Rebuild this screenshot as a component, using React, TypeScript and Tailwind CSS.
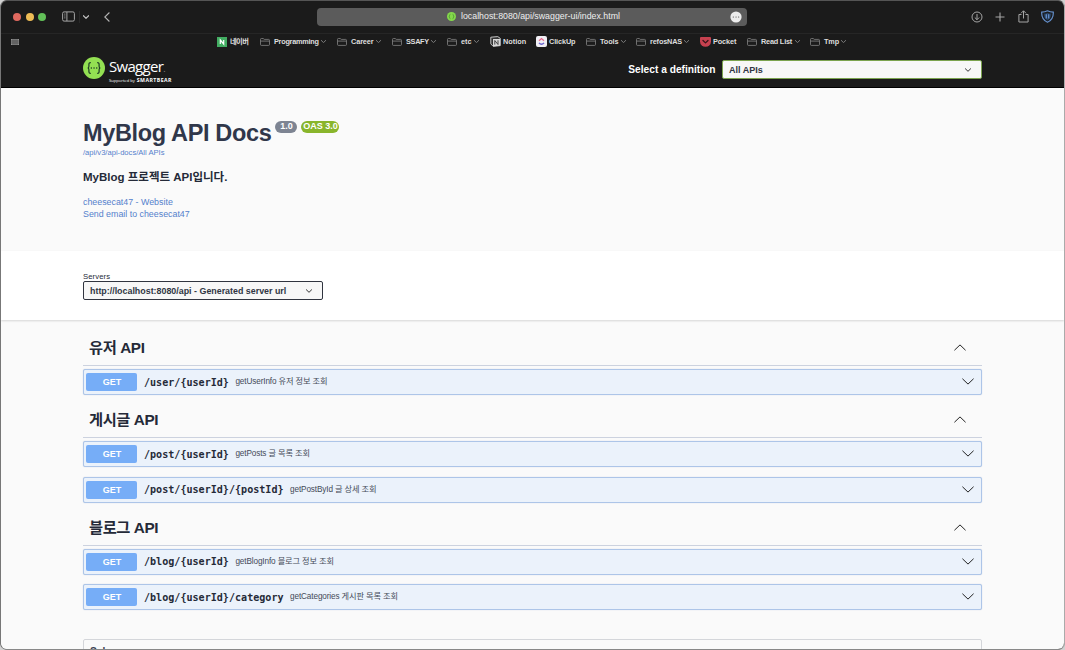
import type { ReactNode } from "react";

const SANS = "font-['Liberation_Sans','Noto_Sans_CJK_KR',sans-serif]";

function Chevron({ className, up = false, weight = 1 }: { className: string; up?: boolean; weight?: number }) {
  return (
    <svg viewBox="0 0 12 7" fill="none" stroke="currentColor" strokeWidth={weight} strokeLinecap="round" strokeLinejoin="round" className={className}>
      <path d={up ? "M0.7 6 L6 0.9 L11.3 6" : "M0.7 1 L6 6.1 L11.3 1"} />
    </svg>
  );
}

function FolderIcon() {
  return (
    <svg viewBox="0 0 10 8" fill="none" stroke="#858585" strokeWidth="0.8" className="h-2 w-2.5">
      <path d="M0.5 6.5V1.4Q0.5 0.5 1.4 0.5H3.2L4.2 1.4H8.6Q9.5 1.4 9.5 2.3V6.5Q9.5 7.4 8.6 7.4H1.4Q0.5 7.4 0.5 6.5ZM0.5 3.1H9.5" />
    </svg>
  );
}

function NaverIcon() {
  return (
    <svg viewBox="0 0 10 10" className="size-[10px]">
      <rect width="10" height="10" fill="#42ad62" />
      <path d="M3.3 7V3L6.7 7V3" fill="none" stroke="#fff" strokeWidth="1.2" />
    </svg>
  );
}

function NotionIcon() {
  return (
    <svg viewBox="0 0 11 11" className="size-[11px]">
      <path d="M0.8 1.2L7.8 0.6L10.3 2.4V9.6L3.2 10.4L0.8 7.9Z" fill="#333" stroke="#d5d5d5" strokeWidth="0.9" />
      <path d="M3 3H10V9.8L3 10.2Z" fill="#d8d8d8" />
      <path d="M4.8 8.6V4.5L8 8.5V4.3" fill="none" stroke="#333" strokeWidth="0.9" />
    </svg>
  );
}

function ClickUpIcon() {
  return (
    <svg viewBox="0 0 11 11" className="size-[11px]">
      <rect width="11" height="11" rx="2" fill="#f1eff5" />
      <path d="M3 4.7L5.5 2.6L8 4.7" fill="none" stroke="#e56a8e" strokeWidth="1.3" />
      <path d="M2.9 6.9Q5.5 9.6 8.1 6.9" fill="none" stroke="#6964cf" strokeWidth="1.3" />
    </svg>
  );
}

function PocketIcon() {
  return (
    <svg viewBox="0 0 11 10" className="h-[10px] w-[11px]">
      <path d="M1 0H10Q11 0 11 1V4.5A5.5 5.3 0 0 1 0 4.5V1Q0 0 1 0Z" fill="#c6414f" />
      <path d="M3 3.5L5.5 5.9L8 3.5" fill="none" stroke="#351519" strokeWidth="1.3" strokeLinecap="round" strokeLinejoin="round" />
    </svg>
  );
}

type Bookmark = { label: string; slot: string; text: string; icon?: ReactNode };

const bookmarks: Bookmark[] = [
  { label: "네이버", slot: "w-[43px]", text: "ml-[3px] tracking-[-0.6px]", icon: <NaverIcon /> },
  { label: "Programming", slot: "w-[77px]", text: "ml-1 w-[45px] tracking-[-0.25px]" },
  { label: "Career", slot: "w-[55px]", text: "ml-1 w-[23px] tracking-[-0.1px]" },
  { label: "SSAFY", slot: "w-[55px]", text: "ml-1 w-[23px] tracking-[-0.3px]" },
  { label: "etc", slot: "w-[43px]", text: "ml-1 w-[11px]" },
  { label: "Notion", slot: "w-[46px]", text: "ml-[2px]", icon: <NotionIcon /> },
  { label: "ClickUp", slot: "w-[50px]", text: "ml-[2px] tracking-[-0.1px]", icon: <ClickUpIcon /> },
  { label: "Tools", slot: "w-[50px]", text: "ml-1 w-[19px] tracking-[-0.12px]" },
  { label: "refosNAS", slot: "w-[64px]", text: "ml-1 w-[32px] tracking-[-0.15px]" },
  { label: "Pocket", slot: "w-[47px]", text: "ml-[2px] tracking-[-0.1px]", icon: <PocketIcon /> },
  { label: "Read List", slot: "w-[63px]", text: "ml-1 w-[32px] tracking-[-0.2px]" },
  { label: "Tmp", slot: "w-[40px]", text: "ml-1 w-[15px] tracking-[-0.1px]" },
];

function Toolbar() {
  return (
    <div className="flex h-[33px] shrink-0 items-center border-b border-[#262626] pb-px">
      <div className="flex w-[316px] items-center pl-3">
        <span className="size-2 rounded-full bg-[#e0695f]" />
        <span className="ml-[4.5px] size-2 rounded-full bg-[#eebc55]" />
        <span className="ml-[4.5px] size-2 rounded-full bg-[#62c058]" />
        <svg viewBox="0 0 13 11" fill="none" stroke="#a5a5a5" className="ml-4 h-[11px] w-[13px]">
          <rect x="0.6" y="0.9" width="11.8" height="9.2" rx="1.5" />
          <path d="M4.9 1V10" />
          <path d="M2 3.1H3.5M2 5H3.5M2 6.9H3.5" strokeWidth="0.7" />
        </svg>
        <span className="ml-1 h-3 w-px bg-[#292929]" />
        <Chevron weight={2.4} className="ml-[3px] h-[4px] w-[6px] text-[#bdbdbd]" />
        <svg viewBox="0 0 6 10" fill="none" stroke="#b2b2b2" strokeWidth="1.1" className="ml-[15px] h-[10px] w-[6px]">
          <path d="M5.4 0.5L0.8 5L5.4 9.5" />
        </svg>
      </div>
      <div className="flex h-[18px] w-[430px] items-center rounded-[4px] bg-[#5b5b5b] pr-[5px] pl-[130px] text-[8.8px] text-[#eeeeee]">
        <svg viewBox="0 0 10 10" className="size-[9px]">
          <circle cx="5" cy="5" r="5" fill="#84d94b" />
          <path d="M3.8 2.6Q2.8 2.6 2.8 4Q2.8 5 2.1 5Q2.8 5 2.8 6Q2.8 7.4 3.8 7.4M6.2 2.6Q7.2 2.6 7.2 4Q7.2 5 7.9 5Q7.2 5 7.2 6Q7.2 7.4 6.2 7.4" fill="none" stroke="#4a8a34" strokeWidth="0.8" />
        </svg>
        <span className="ml-[5px] pt-px whitespace-nowrap">localhost:8080/api/swagger-ui/index.html</span>
        <svg viewBox="0 0 12 12" className="ml-auto size-[12px]">
          <circle cx="6" cy="6" r="5.6" fill="#ececec" />
          <path d="M3.3 6H3.4M6 6H6.1M8.6 6H8.7" stroke="#555" strokeWidth="1.2" strokeLinecap="round" />
        </svg>
      </div>
      <div className="ml-auto flex items-center pr-[10px] text-[#a5a5a5]">
        <svg viewBox="0 0 12 12" fill="none" stroke="currentColor" className="size-[12px]">
          <circle cx="6" cy="6" r="5" />
          <path d="M6 3V8.7M3.8 6.5L6 8.7L8.2 6.5" />
        </svg>
        <svg viewBox="0 0 10 10" fill="none" stroke="currentColor" strokeWidth="1.1" className="ml-3 size-[10px]">
          <path d="M5 0.5V9.5M0.5 5H9.5" />
        </svg>
        <svg viewBox="0 0 11 13" fill="none" stroke="currentColor" className="ml-[13px] h-[13px] w-[11px]">
          <path d="M3.5 4.5H0.9V12H10.1V4.5H7.5M5.5 8.5V0.9M3 3.3L5.5 0.8L8 3.3" />
        </svg>
        <svg viewBox="0 0 13 13" fill="none" stroke="#648fcb" strokeWidth="1.2" className="ml-[12px] size-[13px]">
          <path d="M6.5 0.8Q9 2 12.3 2.1Q12.7 9.5 6.5 12.3Q0.3 9.5 0.7 2.1Q4 2 6.5 0.8Z" />
          <path d="M6.5 2.7Q8.5 3.5 10.3 3.6Q10.3 8.6 6.5 10.5Q2.7 8.6 2.7 3.6Q4.5 3.5 6.5 2.7Z" fill="#263e5d" stroke="none" />
          <path d="M5.3 4.2V8.5M7.7 4.2V8.5" strokeWidth="1.3" />
        </svg>
      </div>
    </div>
  );
}

function BookmarkBar() {
  return (
    <div className="flex h-[15px] shrink-0 items-center">
      <svg viewBox="0 0 8 6" className="ml-[10px] h-[6px] w-[8px]">
        <rect width="8" height="6" fill="#929292" />
        <path d="M2 0V6M4 0V6M6 0V6M0 2H8M0 4H8" stroke="#1c1c1c" strokeWidth="0.45" />
      </svg>
      <div className="ml-[198px] flex items-center text-[7.3px] font-bold text-[#dedede]">
        {bookmarks.map((b) => (
          <div key={b.label} className={`flex shrink-0 items-center ${b.slot}`}>
            {b.icon ?? <FolderIcon />}
            <span className={`pt-px whitespace-nowrap ${b.text}`}>{b.label}</span>
            {!b.icon && <Chevron weight={2} className="ml-[2px] h-[3px] w-[5px] text-[#8f8f8f]" />}
          </div>
        ))}
      </div>
    </div>
  );
}

function SwaggerBar() {
  return (
    <div className="flex h-[39px] shrink-0 items-center border-b border-black px-[82px] pt-[2px]">
      <svg viewBox="0 0 22 22" className="-mt-[2px] size-[22px]">
        <circle cx="11" cy="11" r="11" fill="#93e052" />
        <path d="M7.8 5.7Q5.9 5.5 5.9 7.4V9.2Q5.9 11 4.6 11Q5.9 11 5.9 12.8V14.6Q5.9 16.5 7.8 16.3M14.2 5.7Q16.1 5.5 16.1 7.4V9.2Q16.1 11 17.4 11Q16.1 11 16.1 12.8V14.6Q16.1 16.5 14.2 16.3" fill="none" stroke="#1c3a24" strokeWidth="1.2" />
        <path d="M8.3 11H8.4M11 11H11.1M13.7 11H13.8" stroke="#1c3a24" strokeWidth="1.4" strokeLinecap="round" />
      </svg>
      <div className="ml-1 flex flex-col pt-[3px] text-white">
        <span className="font-['Open_Sans',sans-serif] text-[15px] leading-[17px] tracking-[-0.7px]">
          Swagger<span className="text-[9px] text-[#888]">.</span>
        </span>
        <span className="flex items-baseline gap-[2px] whitespace-nowrap font-['Open_Sans',sans-serif] leading-[6px]">
          <span className="text-[4.1px]">Supported by</span>
          <span className="text-[5.2px] font-bold tracking-[0.45px]">SMARTBEAR</span>
        </span>
      </div>
      <span className="ml-auto pt-px text-[10.2px] font-bold text-white">Select a definition</span>
      <div className="mt-px ml-[6.5px] flex h-[19px] w-[260px] items-center justify-between rounded-[2px] border border-[#7ba34e] bg-[#f7f7f7] pr-[10px] pl-[6px] text-[9px] font-bold text-[#303644]">
        <span className="pt-[2px]">All APIs</span>
        <Chevron weight={2} className="h-[4px] w-[6px] text-[#333]" />
      </div>
    </div>
  );
}

function Info() {
  return (
    <section className="h-[163px] shrink-0 bg-[#fafafa] pt-[31px] pl-[82px] text-[#3b4151]">
      <div className="flex">
        <h1 className="text-[23.5px] leading-[28px] font-bold tracking-[-0.35px] whitespace-nowrap text-[#30374a]">MyBlog API Docs</h1>
        <span className="mt-[1.5px] ml-1 flex h-[12px] w-[22px] items-center justify-center rounded-full bg-[#7d8492] pt-px text-[9px] font-bold text-white">1.0</span>
        <span className="mt-[1.5px] ml-1 flex h-[12px] w-[38px] items-center justify-center rounded-full bg-[#89b52b] pt-px text-[9px] font-bold whitespace-nowrap text-white">OAS 3.0</span>
      </div>
      <a className="block text-[7.6px] leading-[11px] text-[#5581cc]">/api/v3/api-docs/All APIs</a>
      <h2 className="mt-[10px] text-[11.5px] leading-[18px] font-bold text-[#252a38]">MyBlog 프로젝트 API입니다.</h2>
      <div className="mt-[11px] text-[8.85px] leading-[11.5px] text-[#5581cc]">
        <a className="block">cheesecat47 - Website</a>
        <a className="block">Send email to cheesecat47</a>
      </div>
    </section>
  );
}

function Servers() {
  return (
    <section className="relative h-[69px] shrink-0 bg-white pt-[21px] pl-[82px] shadow-[0_1px_2px_rgba(0,0,0,0.15)]">
      <div className="text-[7.7px] leading-[9px] tracking-[0.1px] text-[#252a38]">Servers</div>
      <div className="flex h-[19px] w-[240px] items-center justify-between rounded-[2px] border border-[#30343f] bg-[#f7f7f7] pr-[10px] pl-[6px] text-[8.9px] font-bold whitespace-nowrap text-[#303644]">
        <span className="pt-[2px]">http://localhost:8080/api - Generated server url</span>
        <Chevron weight={2} className="h-[4px] w-[6px] text-[#333]" />
      </div>
    </section>
  );
}

const groups = [
  { name: "유저 API", ops: [{ path: "/user/{userId}", summary: "getUserInfo 유저 정보 조회" }] },
  {
    name: "게시글 API",
    ops: [
      { path: "/post/{userId}", summary: "getPosts 글 목록 조회" },
      { path: "/post/{userId}/{postId}", summary: "getPostById 글 상세 조회" },
    ],
  },
  {
    name: "블로그 API",
    ops: [
      { path: "/blog/{userId}", summary: "getBlogInfo 블로그 정보 조회" },
      { path: "/blog/{userId}/category", summary: "getCategories 게시판 목록 조회" },
    ],
  },
];

function Operations() {
  return (
    <section className="w-[982px] grow bg-[#fafafa] pt-[10px] pl-[82px]">
      {groups.map((g) => (
        <div key={g.name} className="mb-[7px]">
          <div className="flex h-[36px] items-center justify-between border-b border-[#ccd2df] pr-[16.5px] pl-[6px]">
            <h3 className="pt-[2px] text-[15.3px] font-bold tracking-[-0.4px] text-[#252a38]">{g.name}</h3>
            <Chevron up className="h-[7px] w-[12px] text-[#222]" />
          </div>
          <div className="mt-[3px] flex flex-col gap-[9.5px]">
            {g.ops.map((op) => (
              <div key={op.path} className="flex h-[26px] items-center rounded-[2px] border border-[#adc5e8] bg-[#ebf2fb] pr-[7px] pl-[2.4px] shadow-[0_0_1px_rgba(80,120,180,0.4)]">
                <span className="flex h-[18px] w-[51px] items-center justify-center rounded-[2px] bg-[#76adf7] pt-[2px] text-[9px] font-bold text-white">GET</span>
                <span className="ml-[6.6px] pt-px font-['DejaVu_Sans_Mono',monospace] text-[10.08px] font-bold whitespace-nowrap text-[#252a38]">{op.path}</span>
                <span className="ml-[6.5px] pt-px text-[8.2px] tracking-[-0.12px] whitespace-nowrap text-[#444a58]">{op.summary}</span>
                <Chevron className="mb-px ml-auto h-[7px] w-[12px] text-[#222]" />
              </div>
            ))}
          </div>
        </div>
      ))}
      <div className="mt-[28.5px] h-[60px] rounded-[2px] border border-[#d4d6da] pt-[5px] pl-[6px] text-[10.2px] leading-[14px] font-bold text-[#3b4151]">Schemas</div>
    </section>
  );
}

export default function App() {
  return (
    <div className={`h-[650px] w-[1065px] overflow-hidden bg-[#d2d2d2] antialiased ${SANS}`}>
      <div className="flex h-full flex-col overflow-hidden rounded-[7px] border border-t-[#555] border-r-[#aaa] border-b-[#888] border-l-[#777] bg-[#1b1b1b]">
        <div className="flex min-h-0 grow flex-col overflow-hidden">
          <Toolbar />
          <BookmarkBar />
          <SwaggerBar />
          <Info />
          <Servers />
          <div className="flex min-h-0 grow overflow-hidden bg-[#fafafa]">
            <Operations />
            <div className="w-[82px]" />
          </div>
        </div>
      </div>
    </div>
  );
}
